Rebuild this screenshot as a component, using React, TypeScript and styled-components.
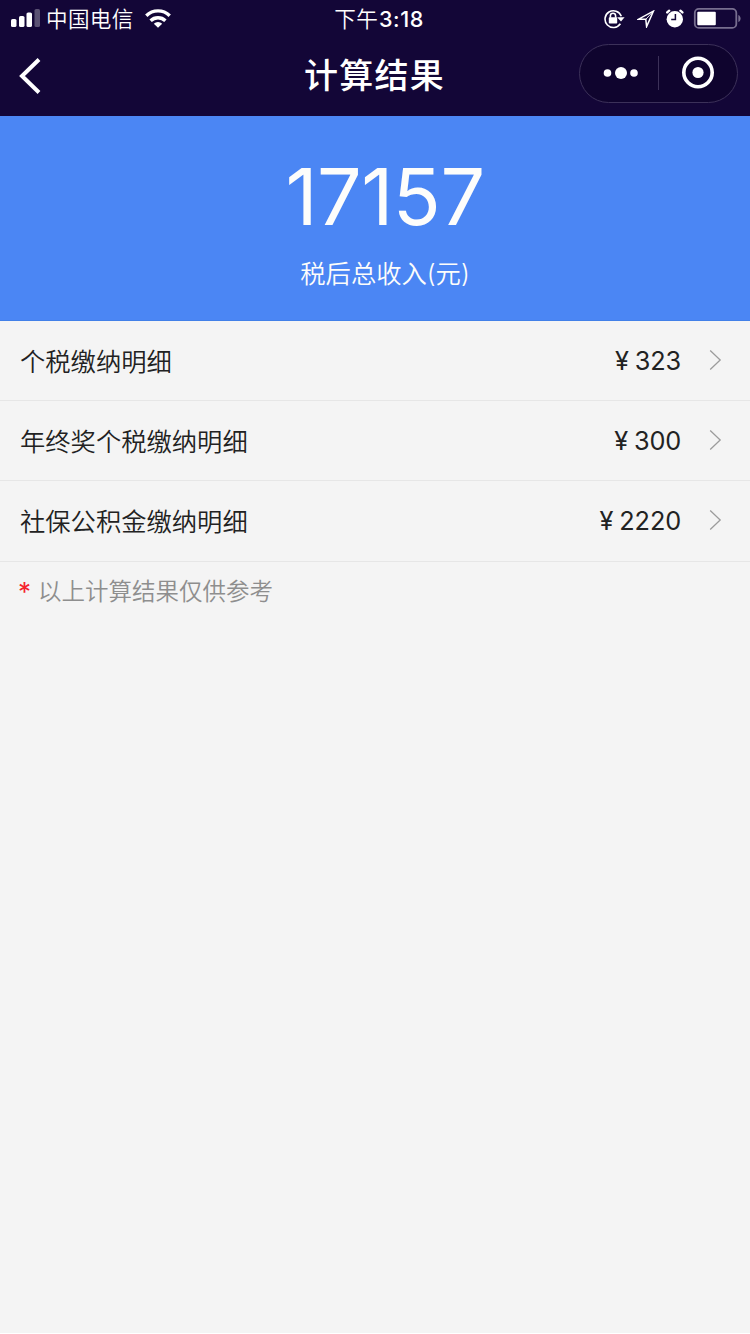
import React from 'react';
import styled, { createGlobalStyle } from 'styled-components';

const GlobalStyle = createGlobalStyle`
  * { box-sizing: border-box; }
  body {
    margin: 0;
    background: #fff;
    font-family: Inter, "Noto Sans CJK SC", sans-serif;
  }
`;

const Screen = styled.main`
  display: flex;
  flex-direction: column;
  width: 750px;
  height: 1333px;
  background: #f4f4f4;
  overflow: hidden;
`;

const Header = styled.header`
  height: 116px;
  background: #130637;
  color: #fff;
`;

const StatusBar = styled.div`
  display: grid;
  grid-template-columns: 1fr auto 1fr;
  align-items: center;
  height: 38px;
  padding: 0 9px 0 11px;
  font-size: 21.6px;
  line-height: 38px;
`;

const Carrier = styled.div`
  display: flex;
  align-items: center;
  height: 38px;
`;

const CarrierName = styled.span`
  margin: 0 11px 0 5px;
  font-weight: 350;
  letter-spacing: 0.3px;
`;

const Time = styled.div`
  display: flex;
  padding-left: 6px;
  font-weight: 350;
  letter-spacing: 0.3px;
`;

const Digits = styled.span`
  margin-left: 1px;
  font-size: 21.6px;
  font-weight: 500;
  letter-spacing: 0.5px;
`;

const Indicators = styled.div`
  display: flex;
  align-items: center;
  justify-content: flex-end;
  height: 36px;
`;

const NavBar = styled.nav`
  display: grid;
  grid-template-columns: 1fr auto 1fr;
  align-items: center;
  height: 70px;
  padding: 0 12px 0 18px;
`;

const BackButton = styled.button`
  display: flex;
  width: 24px;
  margin-top: 6px;
  padding: 0;
  border: 0;
  background: none;
`;

const Title = styled.h1`
  margin: 6px 7px 0 0;
  font-size: 34px;
  font-weight: 500;
  line-height: 50px;
  letter-spacing: 1.3px;
`;

const Capsule = styled.div`
  display: flex;
  align-items: center;
  justify-self: end;
  width: 159px;
  height: 59px;
  border: 1px solid #3c3159;
  border-radius: 30px;
  background: #0f042e;
`;

const CapsuleButton = styled.button`
  display: flex;
  flex: 1;
  align-items: center;
  justify-content: center;
  height: 34px;
  padding: 0;
  border: 0;
  background: none;

  & + & {
    border-left: 1px solid #3c3159;
  }
`;

const Summary = styled.section`
  display: flex;
  flex-direction: column;
  align-items: center;
  height: 205px;
  padding: 31px 0 0 20px;
  background: #4b86f4;
  border-bottom: 1px solid #4280e8;
  color: #fdfdfb;
`;

const Total = styled.strong`
  font-size: 79px;
  font-weight: 370;
  line-height: 98px;
  letter-spacing: -0.5px;
`;

const TotalLabel = styled.span`
  margin-top: 11px;
  font-size: 25.3px;
  font-weight: 350;
  line-height: 36px;
`;

const List = styled.ul`
  margin: 0;
  padding: 0;
  list-style: none;
`;

const Row = styled.li`
  display: flex;
  align-items: center;
  height: 80.2px;
  padding: 0 28px 0 20px;
  border-bottom: 1px solid #e6e6e6;
  color: #222;
  font-size: 25.3px;
`;

const RowLabel = styled.span`
  flex: 1;
  padding-bottom: 2px;
  font-weight: 350;
`;

const Amount = styled.span`
  margin-right: 27px;
  font-weight: 380;
  letter-spacing: -0.15px;
`;

const Currency = styled.span`
  margin-right: 6px;
`;

const Note = styled.p`
  display: flex;
  margin: 12px 0 0 18px;
  color: #8e8e8e;
  font-size: 23.5px;
  font-weight: 350;
  line-height: 36px;
`;

const Asterisk = styled.span`
  width: 20px;
  color: #f5232d;
  font-size: 26px;
  font-weight: 400;
`;

const SignalIcon = () => (
  <svg width="30" height="20" viewBox="0 0 30 20" fill="#fff">
    <rect x="0" y="10" width="5.5" height="8" rx="1.6" />
    <rect x="8" y="7" width="5.5" height="11" rx="1.6" />
    <rect x="15.5" y="3.5" width="5.5" height="14.5" rx="1.6" />
    <rect x="23.5" y="0" width="5.5" height="18" rx="1.6" opacity=".3" />
  </svg>
);

const WifiIcon = () => (
  <svg width="26" height="20" viewBox="0 0 26 20" fill="none" stroke="#fff" strokeWidth="3.4">
    <path d="M1.3 6.7a16.7 16.7 0 0 1 23.4 0" />
    <path d="M5.6 11.7a10.6 10.6 0 0 1 14.8 0" />
    <path d="M8.8 14.8a6 6 0 0 1 8.4 0L13 18.8z" fill="#fff" stroke="none" />
  </svg>
);

const RotationLockIcon = () => (
  <svg width="22" height="20" viewBox="0 0 22 20" fill="none" stroke="#fff" strokeWidth="1.6">
    <path d="M16.4 14.8a8.4 8.4 0 1 1 .9-7.6" />
    <path d="M13.1 8.2h7.5l-3.6 4.2z" fill="#fff" stroke="none" />
    <rect x="4.8" y="8.3" width="8.4" height="6.2" rx=".8" fill="#fff" stroke="none" />
    <path d="M6.4 8.7V6.8a2.6 2.6 0 0 1 5.2 0v1.9" />
  </svg>
);

const LocationIcon = () => (
  <svg width="18" height="18" viewBox="0 0 18 18" fill="none" stroke="#fff" strokeWidth="1.5">
    <path d="M16.4 1.2 1.5 9.2l7.3.1.8 7.3z" />
    <path d="M16.4 1.2 8.8 9.3" strokeWidth="0.9" />
  </svg>
);

const AlarmIcon = () => (
  <svg width="18" height="20" viewBox="0 0 18 20" fill="none">
    <circle cx="8.8" cy="10.2" r="8.2" fill="#fff" />
    <path d="M1.2 3.4 3.2 1.7M16.4 3.4 14.4 1.7" stroke="#fff" strokeWidth="2.4" strokeLinecap="round" />
    <path d="M9.4 5v5.6H5.2" stroke="#130637" strokeWidth="1.5" />
  </svg>
);

const BatteryIcon = () => (
  <svg width="48" height="22" viewBox="0 0 48 22" fill="none">
    <rect x="1.8" y="0.9" width="41.5" height="19" rx="4" stroke="#776e8f" strokeWidth="1.8" />
    <rect x="4.3" y="3.7" width="18.5" height="13.6" rx="1" fill="#fff" />
    <path d="M45.3 6.9c3 1 3 6 0 7z" fill="#776e8f" />
  </svg>
);

const Gap = styled.span<{ $width: number }>`
  flex: 0 0 ${({ $width }) => $width}px;
`;

const ChevronIcon = styled.svg`
  margin-bottom: 2px;
`;

const Chevron = () => (
  <ChevronIcon width="14" height="22" viewBox="0 0 14 22" fill="none" stroke="#9c9c9c" strokeWidth="1.3">
    <path d="m2.2 1.5 10 9.5-10 9.5" />
  </ChevronIcon>
);

const items = [
  { label: '个税缴纳明细', amount: 323 },
  { label: '年终奖个税缴纳明细', amount: 300 },
  { label: '社保公积金缴纳明细', amount: 2220 },
];

export default function App() {
  return (
    <>
      <GlobalStyle />
      <Screen>
        <Header>
          <StatusBar>
            <Carrier>
              <SignalIcon />
              <CarrierName>中国电信</CarrierName>
              <WifiIcon />
            </Carrier>
            <Time>
              下午<Digits>3:18</Digits>
            </Time>
            <Indicators>
              <RotationLockIcon />
              <Gap $width={11} />
              <LocationIcon />
              <Gap $width={11} />
              <AlarmIcon />
              <Gap $width={9} />
              <BatteryIcon />
            </Indicators>
          </StatusBar>
          <NavBar>
            <BackButton aria-label="返回">
              <svg width="24" height="38" viewBox="0 0 24 38" fill="none" stroke="#fff" strokeWidth="4">
                <path d="M21 2.5 4 19l17 16.5" />
              </svg>
            </BackButton>
            <Title>计算结果</Title>
            <Capsule>
              <CapsuleButton aria-label="更多">
                <svg width="38" height="14" viewBox="0 0 38 14" fill="#fff">
                  <circle cx="7.5" cy="7" r="3.8" />
                  <circle cx="21" cy="7" r="6" />
                  <circle cx="34" cy="7" r="3.8" />
                </svg>
              </CapsuleButton>
              <CapsuleButton aria-label="关闭">
                <svg width="34" height="34" viewBox="0 0 34 34" fill="none">
                  <circle cx="17" cy="16.5" r="14.2" stroke="#fff" strokeWidth="3.6" />
                  <circle cx="17" cy="16.5" r="5.6" fill="#fff" />
                </svg>
              </CapsuleButton>
            </Capsule>
          </NavBar>
        </Header>
        <Summary>
          <Total>17157</Total>
          <TotalLabel>税后总收入(元)</TotalLabel>
        </Summary>
        <List>
          {items.map(({ label, amount }) => (
            <Row key={label}>
              <RowLabel>{label}</RowLabel>
              <Amount>
                <Currency>¥</Currency>
                {amount}
              </Amount>
              <Chevron />
            </Row>
          ))}
        </List>
        <Note>
          <Asterisk>*</Asterisk>以上计算结果仅供参考
        </Note>
      </Screen>
    </>
  );
}
